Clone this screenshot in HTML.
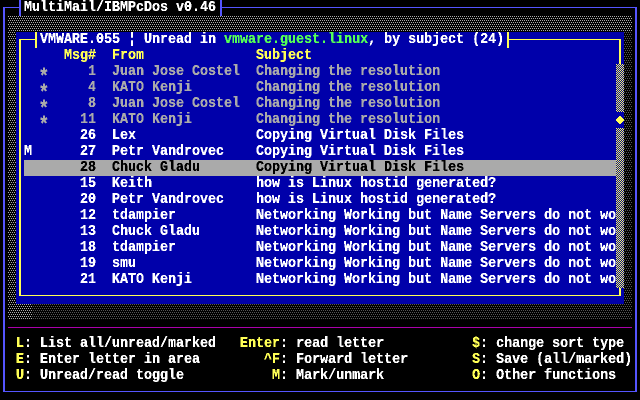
<!DOCTYPE html>
<html>
<head>
<meta charset="utf-8">
<style>
html,body{margin:0;padding:0;background:#000;width:640px;height:400px;overflow:hidden}
#scr{position:relative;width:640px;height:400px;overflow:hidden;background:#000}
svg{position:absolute;left:0;top:0}
#txt{position:absolute;left:0;top:0;width:640px;height:400px;filter:url(#crisp)}
#in{position:absolute;left:0;top:0;width:720px;height:400px;transform:scaleX(.88889);transform-origin:0 0;
font:bold 15px/16px "Liberation Mono",monospace}
.r{position:absolute;left:0;white-space:pre;height:16px;line-height:16px}
.a{font-size:21px;margin-top:7px;margin-left:-2px}
.w{color:#fff}.g{color:#aaa}.y{color:#ff5}.l{color:#5f5}.k{color:#000}
</style>
</head>
<body>
<div id="scr">
<svg width="640" height="400" shape-rendering="crispEdges">
<defs>
<pattern id="d1" width="2" height="4" patternUnits="userSpaceOnUse">
<rect x="0" y="0" width="1" height="1" fill="#aaa"/><rect x="1" y="2" width="1" height="1" fill="#aaa"/>
</pattern>
<pattern id="d2" width="2" height="4" patternUnits="userSpaceOnUse">
<rect x="0" y="0" width="1" height="1" fill="#555"/><rect x="1" y="2" width="1" height="1" fill="#555"/>
</pattern>
<pattern id="ck" width="2" height="2" patternUnits="userSpaceOnUse">
<rect width="2" height="2" fill="#00a"/>
<rect x="0" y="0" width="1" height="1" fill="#ff5"/><rect x="1" y="1" width="1" height="1" fill="#ff5"/>
</pattern>
<filter id="crisp" x="0" y="0" width="100%" height="100%" color-interpolation-filters="sRGB">
<feComponentTransfer><feFuncA type="discrete" tableValues="0 1 1 1"/></feComponentTransfer>
</filter>
</defs>
<rect x="8" y="16" width="624" height="304" fill="url(#d1)"/>
<rect x="624" y="32" width="8" height="288" fill="#000"/>
<rect x="624" y="32" width="8" height="288" fill="url(#d2)"/>
<rect x="32" y="304" width="600" height="16" fill="#000"/>
<rect x="32" y="304" width="600" height="16" fill="url(#d2)"/>
<rect x="16" y="32" width="608" height="272" fill="#00a"/>
<!-- outer frame -->
<rect x="3" y="7" width="17" height="1" fill="#55f"/>
<rect x="3" y="7" width="2" height="385" fill="#55f"/>
<rect x="3" y="391" width="634" height="1" fill="#55f"/>
<rect x="635" y="7" width="2" height="385" fill="#55f"/>
<rect x="222" y="7" width="415" height="1" fill="#55f"/>
<rect x="19" y="0" width="2" height="16" fill="#55f"/>
<rect x="220" y="0" width="2" height="16" fill="#55f"/>
<!-- magenta separator -->
<rect x="8" y="327" width="624" height="1" fill="#a0a"/>
<!-- inner frame -->
<rect x="19" y="39" width="16" height="1" fill="#ff5"/>
<rect x="35" y="32" width="2" height="16" fill="#ff5"/>
<rect x="507" y="32" width="2" height="16" fill="#ff5"/>
<rect x="509" y="39" width="112" height="1" fill="#ff5"/>
<rect x="19" y="39" width="2" height="257" fill="#ff5"/>
<rect x="619" y="39" width="2" height="25" fill="#ff5"/>
<rect x="19" y="295" width="602" height="1" fill="#ff5"/>
<rect x="619" y="288" width="2" height="8" fill="#ff5"/>
<!-- selection bar -->
<rect x="24" y="160" width="592" height="16" fill="#aaa"/>
<!-- scrollbar -->
<rect x="616" y="64" width="8" height="48" fill="url(#ck)"/>
<rect x="616" y="128" width="8" height="160" fill="url(#ck)"/>
<g fill="#ff5">
<rect x="619" y="116" width="2" height="1"/>
<rect x="618" y="117" width="4" height="1"/>
<rect x="617" y="118" width="6" height="1"/>
<rect x="616" y="119" width="8" height="2"/>
<rect x="617" y="121" width="6" height="1"/>
<rect x="618" y="122" width="4" height="1"/>
<rect x="619" y="123" width="2" height="1"/>
</g>
</svg>
<div id="txt"><div id="in">
<div class="r w" style="top:0;left:27px">MultiMail/IBMPcDos v0.46</div>
<div class="r w" style="top:32px;left:45px">VMWARE.055 ¦ Unread in <span class="l">vmware.guest.linux</span>, by subject (24)</div>
<div class="r y" style="top:48px;left:72px">Msg#  From              Subject</div>
<div class="r g a" style="top:64px;left:45px">*</div>
<div class="r g a" style="top:80px;left:45px">*</div>
<div class="r g a" style="top:96px;left:45px">*</div>
<div class="r g a" style="top:112px;left:45px">*</div>
<div class="r g" style="top:64px;left:45px">      1  Juan Jose Costel  Changing the resolution</div>
<div class="r g" style="top:80px;left:45px">      4  KATO Kenji        Changing the resolution</div>
<div class="r g" style="top:96px;left:45px">      8  Juan Jose Costel  Changing the resolution</div>
<div class="r g" style="top:112px;left:45px">     11  KATO Kenji        Changing the resolution</div>
<div class="r w" style="top:128px;left:27px">       26  Lex               Copying Virtual Disk Files</div>
<div class="r w" style="top:144px;left:27px">M      27  Petr Vandrovec    Copying Virtual Disk Files</div>
<div class="r k" style="top:160px;left:27px">       28  Chuck Gladu       Copying Virtual Disk Files</div>
<div class="r w" style="top:176px;left:27px">       15  Keith             how is Linux hostid generated?</div>
<div class="r w" style="top:192px;left:27px">       20  Petr Vandrovec    how is Linux hostid generated?</div>
<div class="r w" style="top:208px;left:27px">       12  tdampier          Networking Working but Name Servers do not wo</div>
<div class="r w" style="top:224px;left:27px">       13  Chuck Gladu       Networking Working but Name Servers do not wo</div>
<div class="r w" style="top:240px;left:27px">       18  tdampier          Networking Working but Name Servers do not wo</div>
<div class="r w" style="top:256px;left:27px">       19  smu               Networking Working but Name Servers do not wo</div>
<div class="r w" style="top:272px;left:27px">       21  KATO Kenji        Networking Working but Name Servers do not wo</div>
<div class="r w" style="top:336px;left:18px"><span class="y">L</span>: List all/unread/marked   <span class="y">Enter</span>: read letter           <span class="y">$</span>: change sort type</div>
<div class="r w" style="top:352px;left:18px"><span class="y">E</span>: Enter letter in area        <span class="y">^F</span>: Forward letter        <span class="y">S</span>: Save (all/marked)</div>
<div class="r w" style="top:368px;left:18px"><span class="y">U</span>: Unread/read toggle           <span class="y">M</span>: Mark/unmark           <span class="y">O</span>: Other functions</div>
</div></div>
</div>
</body>
</html>
